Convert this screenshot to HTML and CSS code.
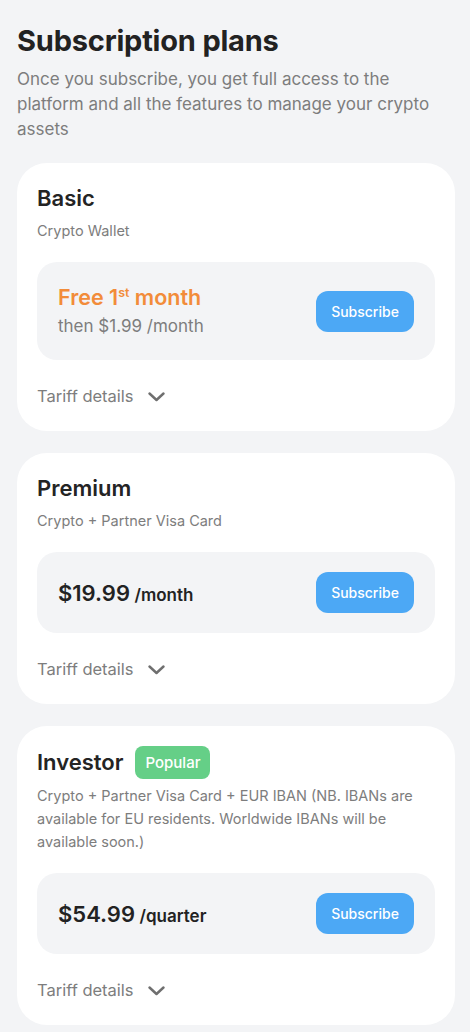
FILE: index.html
```html
<!DOCTYPE html>
<html lang="en">
<head>
<meta charset="utf-8">
<title>Subscription plans</title>
<link rel="stylesheet" href="styles.css">
</head>
<body>
<main class="page">
  <h1 class="page-title">Subscription plans</h1>
  <p class="page-sub">Once you subscribe, you get full access to the platform and all the features to manage your crypto assets</p>

  <section class="plan">
    <div class="plan-head"><h2 class="plan-name">Basic</h2></div>
    <p class="plan-desc">Crypto Wallet</p>
    <div class="price-box">
      <div class="price-info">
        <div class="free">Free 1<sup>st</sup> month</div>
        <div class="then">then $1.99 /month</div>
      </div>
      <button class="subscribe">Subscribe</button>
    </div>
    <div class="details">Tariff details
      <svg class="chev" width="17" height="10" viewBox="0 0 17 10"><path d="M1.5 1.5 L8.5 8 L15.5 1.5" fill="none" stroke="#6f6f6f" stroke-width="2.4" stroke-linecap="round" stroke-linejoin="round"/></svg>
    </div>
  </section>

  <section class="plan">
    <div class="plan-head"><h2 class="plan-name">Premium</h2></div>
    <p class="plan-desc">Crypto + Partner Visa Card</p>
    <div class="price-box">
      <div class="price-info">
        <span class="amount">$19.99</span> <span class="period">/month</span>
      </div>
      <button class="subscribe">Subscribe</button>
    </div>
    <div class="details">Tariff details
      <svg class="chev" width="17" height="10" viewBox="0 0 17 10"><path d="M1.5 1.5 L8.5 8 L15.5 1.5" fill="none" stroke="#6f6f6f" stroke-width="2.4" stroke-linecap="round" stroke-linejoin="round"/></svg>
    </div>
  </section>

  <section class="plan">
    <div class="plan-head"><h2 class="plan-name">Investor</h2><span class="badge">Popular</span></div>
    <p class="plan-desc">Crypto + Partner Visa Card + EUR IBAN (NB. IBANs are available for EU residents. Worldwide IBANs will be available soon.)</p>
    <div class="price-box">
      <div class="price-info">
        <span class="amount">$54.99</span> <span class="period">/quarter</span>
      </div>
      <button class="subscribe">Subscribe</button>
    </div>
    <div class="details">Tariff details
      <svg class="chev" width="17" height="10" viewBox="0 0 17 10"><path d="M1.5 1.5 L8.5 8 L15.5 1.5" fill="none" stroke="#6f6f6f" stroke-width="2.4" stroke-linecap="round" stroke-linejoin="round"/></svg>
    </div>
  </section>
</main>
</body>
</html>
```
FILE: styles.css
```css
* { box-sizing: border-box; }
html, body { margin: 0; padding: 0; }
body {
  background: #f3f4f6;
  font-family: Inter, "Noto Sans", sans-serif;
  color: #222222;
}
.page {
  padding: 23px 15px 20px 17px;
  display: flex;
  flex-direction: column;
}
.page-title {
  margin: 0;
  font-size: 29px;
  line-height: 36px;
  font-weight: 700;
  color: #222;
  letter-spacing: -0.2px;
}
.page-sub {
  margin: 8px 0 21px;
  font-size: 17px;
  line-height: 25px;
  color: #7d7d7d;
}
.plan {
  background: #fff;
  border-radius: 30px;
  padding: 17px 20px 23px;
  margin-bottom: 22px;
}
.plan-head {
  display: flex;
  align-items: center;
  gap: 12px;
}
.plan-name {
  margin: 0;
  font-size: 22px;
  line-height: 36px;
  font-weight: 600;
  color: #242424;
}
.badge {
  background: #65cf87;
  color: #fff;
  font-size: 15px;
  font-weight: 500;
  height: 33px;
  line-height: 33px;
  padding: 0 10px;
  border-radius: 8px;
  margin: 3px 0 2px;
}
.plan-desc {
  margin: 3px 0 0;
  font-size: 14.5px;
  line-height: 23px;
  color: #7d7d7d;
}
.price-box {
  margin-top: 20px;
  background: #f3f4f6;
  border-radius: 20px;
  padding: 20px 21px;
  display: flex;
  align-items: center;
  justify-content: space-between;
}
.free {
  color: #f28c3a;
  font-size: 21.5px;
  line-height: 30px;
  font-weight: 600;
}
.free sup {
  font-size: 12.5px;
  line-height: 0;
  vertical-align: 8px;
  font-weight: 600;
}
.then {
  color: #7d7d7d;
  font-size: 17px;
  line-height: 28px;
}
.amount {
  font-size: 22px;
  font-weight: 600;
  color: #222;
}
.period {
  font-size: 17px;
  font-weight: 600;
  color: #222;
}
.subscribe {
  font-family: inherit;
  border: 0;
  background: #4ca8f5;
  color: #fff;
  font-size: 14px;
  font-weight: 500;
  height: 41px;
  width: 98px;
  border-radius: 12px;
  padding: 0;
}
.details {
  margin-top: 24px;
  font-size: 16.5px;
  line-height: 24px;
  color: #7d7d7d;
  display: flex;
  align-items: center;
  gap: 14px;
}
.chev { display: block; margin-top: 1px; }
```
